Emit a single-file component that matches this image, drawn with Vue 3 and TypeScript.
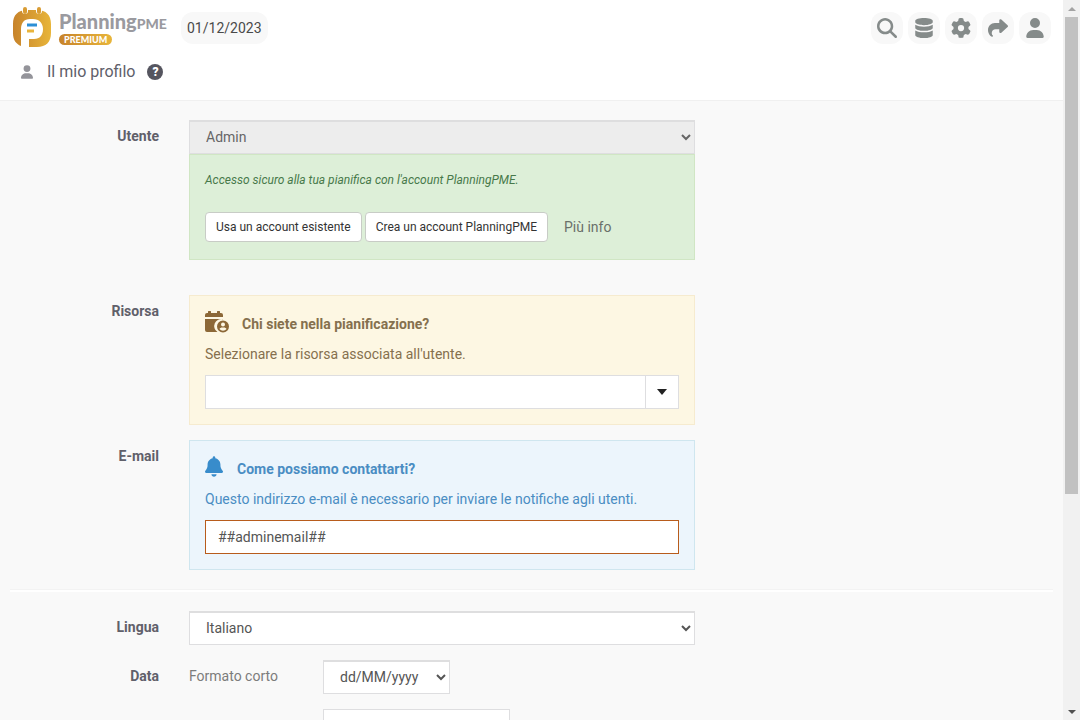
<script setup lang="ts">
import { ref } from 'vue'

interface Action {
  label: string
  path: string
  box: string
}

const user = ref('Admin')
const resource = ref('')
const email = ref('##adminemail##')
const language = ref('Italiano')
const dateFormat = ref('dd/MM/yyyy')
const longFormat = ref('')

const actions: Action[] = [
  {
    label: 'Cerca',
    box: '0 0 512 512',
    path: 'M416 208c0 45.900-14.900 88.300-40 122.700L502.600 457.400c12.500 12.500 12.500 32.800 0 45.300s-32.800 12.500-45.300 0L330.700 376c-34.400 25.200-76.800 40-122.700 40C93.100 416 0 322.900 0 208S93.100 0 208 0S416 93.100 416 208zM208 352a144 144 0 1 0 0-288 144 144 0 1 0 0 288z',
  },
  {
    label: 'Dati',
    box: '-32 0 512 512',
    path: 'M448 73v38c0 40-100 73-224 73S0 151 0 111V73C0 33 100 0 224 0s224 33 224 73zM448 173v82c0 40-100 73-224 73S0 295 0 255v-82c48 33 136 49 224 49s176-16 224-49zM448 317v122c0 40-100 73-224 73S0 479 0 439V317c48 33 136 49 224 49s176-16 224-49z',
  },
  {
    label: 'Impostazioni',
    box: '0 0 512 512',
    path: 'M495.900 166.600c3.200 8.700 .5 18.400-6.400 24.600l-43.300 39.400c1.100 8.300 1.700 16.800 1.700 25.400s-.6 17.100-1.700 25.400l43.300 39.400c6.900 6.200 9.600 15.900 6.400 24.600c-4.400 11.900-9.700 23.300-15.800 34.300l-4.700 8.100c-6.600 11-14 21.400-22.100 31.200c-5.900 7.200-15.700 9.600-24.500 6.800l-55.700-17.700c-13.400 10.300-28.200 18.900-44 25.400l-12.500 57.100c-2 9.100-9 16.300-18.200 17.800c-13.800 2.300-28 3.500-42.500 3.500s-28.700-1.200-42.500-3.500c-9.200-1.500-16.200-8.700-18.200-17.800l-12.500-57.100c-15.800-6.500-30.600-15.100-44-25.400L83.100 425.900c-8.800 2.800-18.600 .3-24.500-6.800c-8.100-9.800-15.500-20.200-22.100-31.200l-4.700-8.100c-6.100-11-11.400-22.400-15.800-34.300c-3.200-8.700-.5-18.400 6.400-24.600l43.300-39.400C64.600 273.100 64 264.600 64 256s.6-17.100 1.700-25.400L22.400 191.200c-6.900-6.200-9.600-15.900-6.400-24.600c4.400-11.900 9.700-23.300 15.800-34.300l4.700-8.100c6.600-11 14-21.400 22.100-31.200c5.900-7.200 15.700-9.600 24.500-6.800l55.700 17.700c13.400-10.300 28.200-18.900 44-25.400l12.500-57.100c2-9.100 9-16.300 18.200-17.800C227.300 1.200 241.500 0 256 0s28.700 1.200 42.500 3.500c9.200 1.500 16.200 8.700 18.200 17.800l12.500 57.100c15.800 6.500 30.600 15.100 44 25.400l55.700-17.700c8.800-2.800 18.600-.3 24.500 6.800c8.100 9.800 15.500 20.200 22.100 31.200l4.700 8.100c6.100 11 11.400 22.400 15.800 34.300zM256 336a80 80 0 1 0 0-160 80 80 0 1 0 0 160z',
  },
  {
    label: 'Condividi',
    box: '0 0 512 512',
    path: 'M307 34.800c-11.500 5.100-19 16.600-19 29.200v64H176C78.800 128 0 206.800 0 304C0 417.300 81.500 467.900 100.200 478.100c2.500 1.400 5.300 1.900 8.100 1.900c10.900 0 19.700-8.900 19.700-19.700c0-7.500-4.300-14.400-9.800-19.500C108.800 431.900 96 414.400 96 384c0-53 43-96 96-96h96v64c0 12.600 7.400 24.100 19 29.200s25 3 34.400-5.400l160-144c6.700-6.100 10.600-14.700 10.600-23.800s-3.800-17.700-10.600-23.800l-160-144c-9.400-8.500-22.900-10.600-34.400-5.400z',
  },
  {
    label: 'Profilo',
    box: '-32 0 512 512',
    path: 'M224 256A128 128 0 1 0 224 0a128 128 0 1 0 0 256zm-45.700 48C79.800 304 0 383.800 0 482.300C0 498.700 13.300 512 29.700 512H418.300c16.400 0 29.700-13.300 29.700-29.700C448 383.800 368.200 304 269.700 304H178.300z',
  },
]
</script>

<template>
  <div class="window">
    <div class="page">
      <header class="header">
        <div class="topbar">
          <a class="logo" href="#" aria-label="PlanningPME Premium">
            <svg class="logo-mark" viewBox="0 0 38 42" aria-hidden="true">
              <defs>
                <linearGradient id="gold" x1="0" y1="0" x2="1" y2="0">
                  <stop offset="0" stop-color="#c7832b" />
                  <stop offset="1" stop-color="#e8b53a" />
                </linearGradient>
              </defs>
              <path
                fill="url(#gold)"
                d="M14 3H24C33 3 38 8 38 17V26C38 35 33 40 24 40H16V32H21C27 32 30 28 30 22S26 12 20 12H17C11 12 8 16 8 22V39C3 37 0 33 0 26V17C0 8 5 3 14 3Z"
              />
              <path fill="none" stroke="#fff" stroke-width="6" stroke-linecap="round" d="M12 2V4M26 2V4" />
              <path fill="none" stroke="#d99c34" stroke-width="4" stroke-linecap="round" d="M12 2V5M26 2V5" />
              <path fill="none" stroke="#2d8fd5" stroke-width="3" d="M14 18H24" />
              <path fill="none" stroke="#e9b43b" stroke-width="3" d="M14 24H21" />
            </svg>
            <span class="wordmark">
              <span class="brand">Planning<span class="brand-small">PME</span></span>
              <span class="tier">PREMIUM</span>
            </span>
          </a>
          <button class="date-chip" type="button">01/12/2023</button>
          <nav class="actions">
            <button v-for="a in actions" :key="a.label" class="action" type="button" :aria-label="a.label">
              <svg :viewBox="a.box" aria-hidden="true"><path :d="a.path" /></svg>
            </button>
          </nav>
        </div>
        <div class="title-row">
          <svg class="title-icon" viewBox="0 0 448 512" aria-hidden="true"><path :d="actions[4].path" /></svg>
          <h1>Il mio profilo</h1>
          <button class="help" type="button" aria-label="Aiuto">?</button>
        </div>
      </header>

      <main class="form">
        <div class="row row-user">
          <label class="row-label" for="user">Utente</label>
          <div class="field">
            <select id="user" v-model="user" class="control" disabled>
              <option>Admin</option>
            </select>
            <div class="panel panel-green">
              <p class="secure">Accesso sicuro alla tua pianifica con l'account PlanningPME.</p>
              <div class="buttons">
                <button class="btn" type="button">Usa un account esistente</button>
                <button class="btn" type="button">Crea un account PlanningPME</button>
                <a class="more" href="#">Più info</a>
              </div>
            </div>
          </div>
        </div>

        <div class="row">
          <label class="row-label" for="resource">Risorsa</label>
          <div class="field panel panel-yellow">
            <h2>
              <svg class="calendar" viewBox="0 0 24 22" aria-hidden="true">
                <path d="M3 2V1a1 1 0 0 1 3 0V2H12V1a1 1 0 0 1 3 0V2H16a2 2 0 0 1 2 2V6H0V4A2 2 0 0 1 2 2Z" />
                <path d="M0 8H18V8.300A7 7 0 0 0 12.500 21H2A2 2 0 0 1 0 19Z" />
                <path
                  fill-rule="evenodd"
                  d="M18 9.500a6 6 0 1 0 0 12a6 6 0 0 0 0-12ZM18 11.500a2 2 0 1 1 0 4a2 2 0 0 1 0-4ZM14.500 18C15 17 16 16.500 17 16.500H19C20 16.500 21 17 21.500 18A4.500 4.500 0 0 1 14.500 18Z"
                />
              </svg>
              Chi siete nella pianificazione?
            </h2>
            <p>Selezionare la risorsa associata all'utente.</p>
            <div class="combo">
              <input id="resource" v-model="resource" class="control" type="text" />
              <button class="combo-toggle" type="button" aria-label="Apri elenco">
                <svg viewBox="0 0 10 6" aria-hidden="true"><path d="M0 0H10L5 6Z" /></svg>
              </button>
            </div>
          </div>
        </div>

        <div class="row">
          <label class="row-label" for="email">E-mail</label>
          <div class="field panel panel-blue">
            <h2>
              <svg class="bell" viewBox="0 0 448 512" aria-hidden="true">
                <path
                  d="M224 0c-17.700 0-32 14.300-32 32V51.200C119 66 64 130.600 64 208v18.800c0 47-17.300 92.400-48.500 127.600l-7.400 8.300c-8.400 9.400-10.400 22.900-5.300 34.400S19.400 416 32 416H416c12.600 0 24-7.400 29.200-18.900s3.100-25-5.300-34.400l-7.400-8.300C401.300 319.200 384 273.900 384 226.800V208c0-77.400-55-142-128-156.800V32c0-17.700-14.300-32-32-32zm45.300 493.300c12-12 18.700-28.300 18.700-45.300H160c0 17 6.700 33.300 18.700 45.300s28.300 18.700 45.300 18.700s33.300-6.700 45.300-18.700z"
                />
              </svg>
              Come possiamo contattarti?
            </h2>
            <p>Questo indirizzo e-mail è necessario per inviare le notifiche agli utenti.</p>
            <input id="email" v-model="email" class="control invalid" type="text" />
          </div>
        </div>

        <hr />

        <div class="row">
          <label class="row-label" for="language">Lingua</label>
          <div class="field">
            <select id="language" v-model="language" class="control">
              <option>Italiano</option>
            </select>
          </div>
        </div>

        <div class="row">
          <span class="row-label">Data</span>
          <div class="field formats">
            <label for="date-format">Formato corto</label>
            <select id="date-format" v-model="dateFormat" class="control short">
              <option>dd/MM/yyyy</option>
            </select>
            <input v-model="longFormat" class="control medium" type="text" aria-label="Formato data" />
          </div>
        </div>
      </main>
    </div>

    <div class="scrollbar" aria-hidden="true">
      <svg class="up" viewBox="0 0 8 4"><path d="M0 4L4 0L8 4Z" /></svg>
      <div class="track"><div class="thumb"></div></div>
      <svg class="down" viewBox="0 0 8 4"><path d="M0 0H8L4 4Z" /></svg>
    </div>
  </div>
</template>

<style>
body {
  margin: 0;
  overflow: hidden;
}
</style>

<style scoped>
.window {
  display: flex;
  height: 100vh;
  overflow: hidden;
  background: #f9f9f9;
  color: #60606a;
  font: 14px/20px Roboto, "Liberation Sans", sans-serif;
}

.window * {
  box-sizing: border-box;
}

button,
input,
select {
  margin: 0;
  font: inherit;
}

a {
  color: inherit;
  text-decoration: none;
}

.page {
  flex: 1;
  min-width: 0;
  overflow: hidden;
}

.header {
  padding: 8px 12px 16px 13px;
  border-bottom: 1px solid #f0f0f0;
  background: #fff;
}

.topbar {
  display: flex;
  align-items: center;
  height: 40px;
}

.logo {
  display: flex;
  align-items: center;
  gap: 8px;
  width: 168px;
}

.logo-mark {
  width: 38px;
  height: 42px;
}

.wordmark {
  display: flex;
  flex-direction: column;
  align-items: flex-start;
}

.brand {
  color: #9a9a9f;
  font: 900 20px/21px Lato, sans-serif;
  white-space: nowrap;
}

.brand-small {
  font-size: 14px;
}

.tier {
  padding: 0 5px;
  border-radius: 6px;
  background: linear-gradient(90deg, #c7832b, #e8b53a);
  color: #fff;
  font: 900 9px/11px Lato, sans-serif;
}

.date-chip {
  height: 32px;
  padding: 0 6px;
  border: 0;
  border-radius: 12px;
  background: #f8f8f8;
  color: #4a4a4a;
}

.actions {
  display: flex;
  gap: 5px;
  margin-left: auto;
}

.action {
  display: grid;
  place-items: center;
  width: 32px;
  height: 32px;
  padding: 0;
  border: 0;
  border-radius: 12px;
  background: #f8f8f8;
}

.action svg {
  width: 20px;
  height: 20px;
  fill: #858b8a;
}

.title-row {
  display: flex;
  align-items: center;
  height: 24px;
  margin-top: 12px;
  padding-left: 8px;
}

.title-icon {
  width: 12px;
  height: 14px;
  fill: #94949a;
}

h1 {
  margin: 0 12px 0 14px;
  font-size: 16px;
  font-weight: 400;
}

.help {
  width: 16px;
  height: 16px;
  padding: 0;
  border: 0;
  border-radius: 50%;
  background: #55555f;
  color: #fff;
  font-size: 12px;
  font-weight: 900;
  line-height: 16px;
}

.form {
  display: flex;
  flex-direction: column;
  gap: 15px;
  padding-top: 19px;
}

.row {
  display: grid;
  grid-template-columns: 159px minmax(0, 506px);
  column-gap: 30px;
}

.row-user {
  margin-bottom: 20px;
}

.row-label {
  padding-top: 6px;
  font-weight: 700;
  text-align: right;
}

.control {
  display: block;
  width: 100%;
  height: 34px;
  padding: 0 12px;
  border: 1px solid #dedee0;
  border-radius: 0;
  outline: 0;
  background-color: #fff;
  color: #555;
}

select.control {
  padding-bottom: 2px;
  border-top: 2px solid #dededf;
}

.control:disabled {
  background-color: #ededed;
  color: #666;
  opacity: 1;
}

.panel {
  padding: 15px;
  border: 1px solid;
}

.panel-green {
  height: 106px;
  border-color: #d0e6c4;
  background: #ddefd8;
}

.panel-yellow {
  border-color: #f6ebcf;
  background: #fdf7e3;
  color: #85704e;
}

.panel-blue {
  border-color: #cfe6ef;
  background: #ecf5fc;
  color: #4a8dc3;
}

.panel p {
  margin: 0;
}

.secure {
  color: #47794a;
  font-size: 12px;
  font-style: italic;
}

.buttons {
  display: flex;
  align-items: center;
  gap: 3px;
  margin-top: 22px;
}

.btn {
  height: 30px;
  padding: 0 10px;
  border: 1px solid #c8ccc6;
  border-radius: 4px;
  background: #fff;
  color: #333;
  font-size: 12px;
}

.more {
  margin-left: 13px;
  color: #6a706a;
}

.panel h2 {
  display: flex;
  align-items: flex-start;
  gap: 13px;
  height: 33px;
  margin: 0;
  font-size: 14px;
  font-weight: 700;
  line-height: 26px;
}

.calendar {
  width: 24px;
  height: 22px;
  fill: #8c6837;
}

.panel-blue h2 {
  gap: 14px;
}

.bell {
  width: 18px;
  height: 21px;
  fill: #388ccb;
}

.panel-yellow,
.panel-blue {
  height: 130px;
}

.panel-yellow p,
.panel-blue p {
  margin-bottom: 11px;
}

.combo {
  display: flex;
}

.combo .control {
  flex: 1;
  min-width: 0;
}

.combo-toggle {
  display: grid;
  place-items: center;
  width: 33px;
  padding: 0;
  border: 1px solid #dedee0;
  border-left: 0;
  background: #fff;
}

.combo-toggle svg {
  width: 10px;
  height: 6px;
  fill: #222;
}

.control.invalid {
  border-color: #b85c1c;
}

hr {
  width: calc(100% - 20px);
  height: 3px;
  margin: 4px auto;
  border: 0;
  border-top: 1px solid #f3f3f3;
  background: #fff;
}

.formats {
  display: grid;
  grid-template-columns: 134px 1fr;
  row-gap: 15px;
}

.formats label {
  padding-top: 6px;
  color: #7c7c7c;
}

.short {
  width: 127px;
}

.medium {
  grid-column: 2;
  width: 187px;
}

.scrollbar {
  display: flex;
  flex-direction: column;
  align-items: center;
  width: 17px;
  background: #f1f1f1;
}

.scrollbar svg {
  width: 8px;
  height: 4px;
  margin: 7px 0 6px;
}

.up {
  fill: #a3a3a3;
}

.down {
  fill: #505050;
}

.track {
  flex: 1;
  align-self: stretch;
  padding: 0 2px;
}

.thumb {
  height: 69.5%;
  background: #c1c1c1;
}
</style>
